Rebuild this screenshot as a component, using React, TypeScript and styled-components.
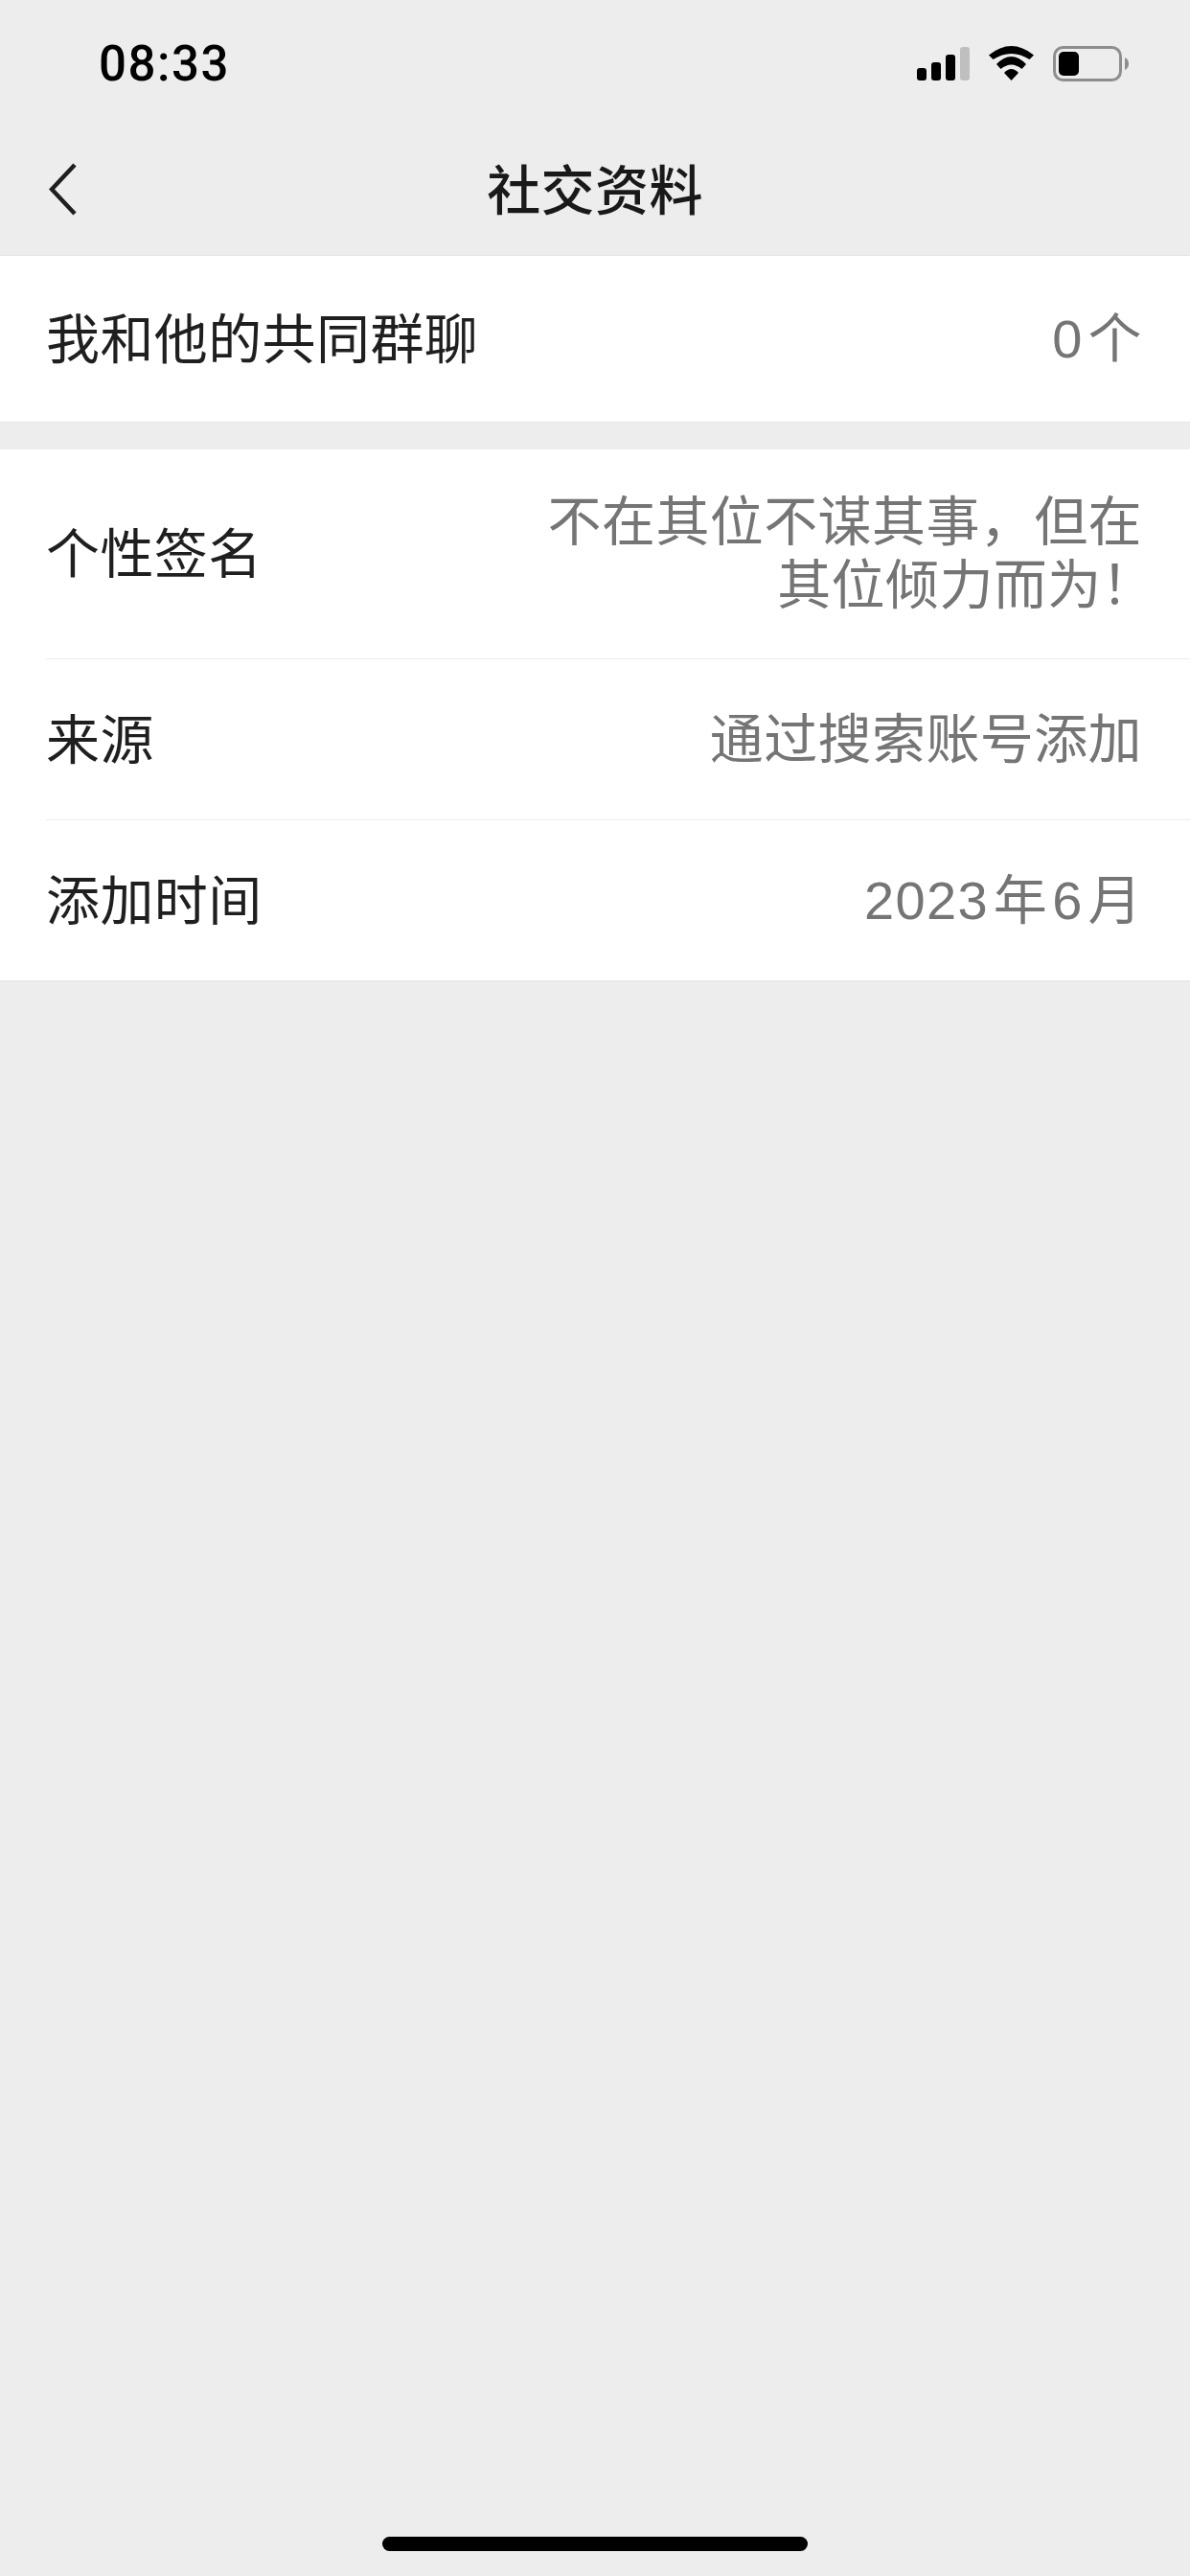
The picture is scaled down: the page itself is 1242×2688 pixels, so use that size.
import styled, { createGlobalStyle } from "styled-components";

const GlobalStyle = createGlobalStyle`
  html, body {
    margin: 0;
    padding: 0;
    background: #ededed;
  }
  body {
    font-family: "Liberation Sans", "Noto Sans CJK SC", sans-serif;
  }
`;

const Page = styled.div`
  width: 1242px;
  height: 2688px;
  display: flex;
  flex-direction: column;
  background: #ededed;
  overflow: hidden;
`;

const StatusBar = styled.div`
  height: 132px;
  box-sizing: border-box;
  padding: 0 64px 0 103px;
  display: flex;
  align-items: center;
  justify-content: space-between;
`;

const Clock = styled.div`
  font-family: "Roboto", sans-serif;
  font-size: 51px;
  font-weight: 500;
  letter-spacing: 1.5px;
  color: #000;
`;

const StatusIcons = styled.div`
  display: flex;
  align-items: center;
  gap: 20px;
`;

const NavBar = styled.div`
  height: 135px;
  box-sizing: border-box;
  display: grid;
  grid-template-columns: 1fr auto 1fr;
  align-items: center;
  border-bottom: 1px solid #e3e3e3;
`;

const BackButton = styled.div`
  margin-left: 51px;
  height: 55px;
  margin-bottom: 4px;
`;

const Title = styled.div`
  font-size: 56px;
  font-weight: 500;
  font-family: "Noto Sans CJK SC", sans-serif;
  letter-spacing: 0.4px;
  color: #191919;
  margin-bottom: 10px;
`;

const Card = styled.div`
  background: #fff;
  border-bottom: 1px solid #e5e5e5;
  margin-bottom: 28px;
`;

const Row = styled.div<{ $height: number }>`
  height: ${(p) => p.$height}px;
  margin-left: 48px;
  box-sizing: border-box;
  padding-right: 50px;
  display: flex;
  align-items: center;
  justify-content: space-between;
  & + & {
    border-top: 1px solid #ececec;
  }
`;

const Label = styled.div`
  font-size: 56px;
  line-height: 66px;
  letter-spacing: 0.4px;
  padding-top: 2px;
  color: #1f1f1f;
`;

const Value = styled.div`
  width: 624px;
  font-size: 56px;
  line-height: 66px;
  letter-spacing: 0.4px;
  word-spacing: -11px;
  color: #757575;
  text-align: right;
`;

const Digits = styled.span`
  letter-spacing: 1.3px;
`;

/* the closing ！ hangs a little past the edge, only the last line moves */
const Signature = styled.span`
  margin-right: -14px;
`;

const HomeBar = styled.div`
  width: 444px;
  height: 15px;
  border-radius: 8px;
  background: #000;
  margin: auto auto 26px;
`;

const rows = [
  {
    label: "个性签名",
    value: <Signature>不在其位不谋其事，但在其位倾力而为！</Signature>,
    height: 218,
  },
  { label: "来源", value: "通过搜索账号添加", height: 168 },
  {
    label: "添加时间",
    value: (
      <>
        <Digits>2023</Digits> 年 <Digits>6</Digits> 月
      </>
    ),
    height: 168,
  },
];

const SignalIcon = () => (
  <svg width="55" height="35" viewBox="0 0 55 35">
    <rect x="0" y="22" width="10" height="13" rx="3" fill="#000" />
    <rect x="15" y="16" width="10" height="19" rx="3" fill="#000" />
    <rect x="30" y="8" width="10" height="27" rx="3" fill="#000" />
    <rect x="45" y="0" width="10" height="35" rx="3" fill="#bfbfbf" />
  </svg>
);

const WifiIcon = () => (
  <svg width="47" height="36" viewBox="0 0 47 36">
    <path d="M0 9.5Q23.5-9.5 47 9.5L42.5 14Q23.5 2 4.500 14Z" fill="#000" />
    <path d="M8 19Q23.5 3 39 19L34.500 24Q23.500 15 12.500 24Z" fill="#000" />
    <path d="M16 28Q23.500 20 31 28L23.500 36Z" fill="#000" />
  </svg>
);

const BatteryIcon = () => (
  <svg width="79" height="37" viewBox="0 0 79 37">
    <rect x="1.500" y="1.500" width="69" height="34" rx="9" fill="none" stroke="#8e8e8e" strokeWidth="3" />
    <rect x="6" y="6" width="21" height="25" rx="5" fill="#000" />
    <path d="M75 12C77.500 13 79 15.500 79 18.500C79 21.500 77.500 24 75 25Z" fill="#8e8e8e" />
  </svg>
);

const BackIcon = () => (
  <svg width="29" height="55" viewBox="0 0 29 55">
    <path d="M27 2L3 27.500L27 53" fill="none" stroke="#1f1f1f" strokeWidth="4.500" />
  </svg>
);

export default function App() {
  return (
    <Page>
      <GlobalStyle />
      <StatusBar>
        <Clock>08:33</Clock>
        <StatusIcons>
          <SignalIcon />
          <WifiIcon />
          <BatteryIcon />
        </StatusIcons>
      </StatusBar>
      <NavBar>
        <BackButton>
          <BackIcon />
        </BackButton>
        <Title>社交资料</Title>
      </NavBar>
      <Card>
        <Row $height={173}>
          <Label>我和他的共同群聊</Label>
          <Value>
            <Digits>0</Digits> 个
          </Value>
        </Row>
      </Card>
      <Card>
        {rows.map((row) => (
          <Row key={row.label} $height={row.height}>
            <Label>{row.label}</Label>
            <Value>{row.value}</Value>
          </Row>
        ))}
      </Card>
      <HomeBar />
    </Page>
  );
}
